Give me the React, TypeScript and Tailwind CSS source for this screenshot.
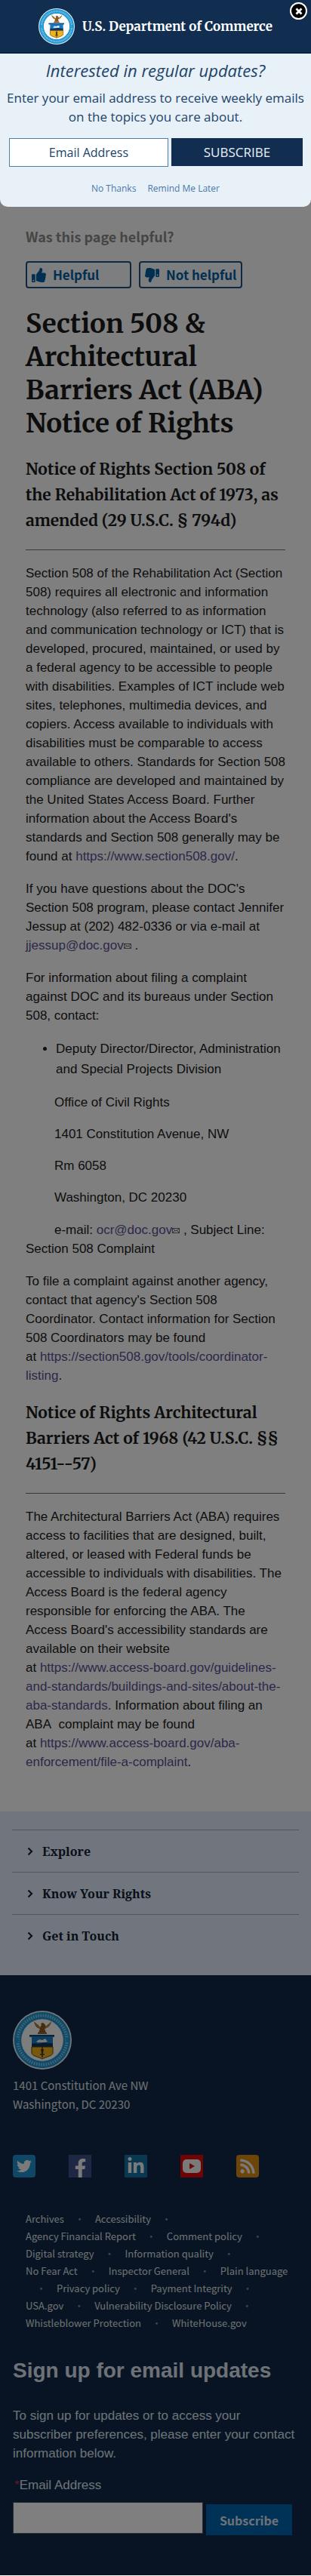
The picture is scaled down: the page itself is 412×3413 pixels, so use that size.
import type { ReactNode } from "react";
import { FaThumbsUp, FaThumbsDown, FaTwitter, FaFacebookF, FaLinkedinIn, FaRss } from "react-icons/fa";

const serif = "font-['Merriweather','Noto_Serif',serif]";
const source = "font-['Noto_Sans_CJK_SC','Noto_Sans',sans-serif]";
const open = "font-['Open_Sans','Noto_Sans',sans-serif]";

function Seal({ className }: { className: string }) {
  return (
    <svg viewBox="0 0 78 78" className={className} aria-label="Department of Commerce seal" role="img">
      <circle cx="39" cy="39" r="39" fill="#e6eef4" />
      <circle cx="39" cy="39" r="32.5" fill="none" stroke="#1e96d2" strokeWidth="9.5" />
      <circle cx="39" cy="39" r="32.5" fill="none" stroke="#c3e4f5" strokeWidth="4" strokeDasharray="1.6 1.6" opacity="0.65" />
      <path d="M5 36v6M73 36v6" stroke="#1e96d2" strokeWidth="5" />
      <circle cx="39" cy="39" r="27.5" fill="#fafafa" />
      <path d="M28 14c1 6 4 9 8 10l-2 5h10l-2-5c4-1 8-4 9-10-2 3-5 4-7 7-1-2-2-4-4-5l-3 1 1 2c-1 1-1 2-2 3-2-4-6-5-8-8z" fill="#8a5a1c" />
      <path d="M30 17c2 3 4 5 6 6M49 17c-2 3-4 5-6 6" stroke="#d09a38" strokeWidth="1.2" fill="none" />
      <path d="M33 30h12" stroke="#5c3a12" strokeWidth="1.5" />
      <path d="M22 32h33v3h-2v13H25V35h-3z" fill="#1879be" />
      <path d="M22 32h33v2H22z" fill="#17466f" />
      <path d="M25 44c5-2 8 1 13-1s9 1 15 0v5H25z" fill="#12355c" />
      <path d="M31 41l4-3 4 1 4-2 3 4-3 1H33z" fill="#e9f1f6" />
      <path d="M25 48h28v8c0 4-9 5-14 8-5-3-14-4-14-8z" fill="#eeb11f" />
      <path d="M25 48h28v8c0 4-9 5-14 8-5-3-14-4-14-8z" fill="none" stroke="#5e430c" strokeWidth="1" />
      <path d="M39 48v14M36 58h6" stroke="#4a3814" strokeWidth="1.6" />
      <path d="M37 51h4l-1 6h-2z" fill="#4a3814" />
    </svg>
  );
}

function Mail() {
  return (
    <svg viewBox="0 0 10 7" className="inline h-[7px] w-2.5" aria-label="email link" role="img">
      <rect x="0.5" y="0.5" width="9" height="6" fill="none" stroke="#6c6c6c" />
      <path d="M1 1l4 3 4-3M1 6l3-3M9 6L6 3" fill="none" stroke="#6c6c6c" />
    </svg>
  );
}

function Link({ children, href }: { children: ReactNode; href: string }) {
  return (
    <a href={href} className="text-[#5a5094]">
      {children}
    </a>
  );
}

function Modal() {
  return (
    <section className={`absolute inset-x-0 top-0 overflow-hidden rounded-b-[10px] bg-[#e8f0f8] text-[#204468] ${open}`}>
      <header className="flex h-[71px] items-center justify-center gap-2.5 border-b-2 border-[#0c2444] bg-[#112e51]">
        <Seal className="size-12" />
        <span className={`text-[17px] leading-6 font-bold text-white ${serif}`}>U.S. Department of Commerce</span>
      </header>
      <button aria-label="Close" className="absolute top-[3px] right-[5px] flex size-[23px] items-center justify-center rounded-full border-2 border-white bg-black">
        <svg viewBox="0 0 10 10" className="size-2.5">
          <path d="M1.5 1.5l7 7M8.5 1.5l-7 7" stroke="#fff" strokeWidth="2.8" />
        </svg>
      </button>
      <div className="px-2 pt-1.5 pb-[15px] text-center">
        <h2 className="text-[22px] leading-8 italic">Interested in regular updates?</h2>
        <p className="mt-2 text-[17px] leading-[25px]">
          Enter your email address to receive weekly emails on the topics you care about.
        </p>
        <form className="mt-4 flex gap-1 pr-[3px] pl-1" onSubmit={(e) => e.preventDefault()}>
          <input
            type="email"
            aria-label="Email Address"
            placeholder="Email Address"
            className="h-[38px] w-0 min-w-0 flex-[6] border border-[#4a7fae] bg-white text-center text-base placeholder:text-[#204468]"
          />
          <button className="h-[37px] flex-[5] bg-[#112e51] text-[17px] text-[#e8f0f8]">SUBSCRIBE</button>
        </form>
        <div className="mt-5 flex justify-center gap-[15px] text-xs leading-[18px] text-[#4a7aa8]">
          <a href="#no">No Thanks</a>
          <a href="#later">Remind Me Later</a>
        </div>
      </div>
    </section>
  );
}

const h2 = `border-b border-[#707070] pb-[21px] text-[21px] leading-[34px] font-bold ${serif}`;

const links = [
  "Archives",
  "Accessibility",
  "Agency Financial Report",
  "Comment policy",
  "Digital strategy",
  "Information quality",
  "No Fear Act",
  "Inspector General",
  "Plain language",
  "Privacy policy",
  "Payment Integrity",
  "USA.gov",
  "Vulnerability Disclosure Policy",
  "Whistleblower Protection",
  "WhiteHouse.gov",
];

export default function App() {
  return (
    <div className="relative bg-white font-['Liberation_Sans',Arial,sans-serif] text-[#1b1b1b]">
      <main className="px-[34px] pt-[301px] pb-[53px]">
        <p className={`text-[18px] leading-6 font-bold text-[#8a8a8a] ${source}`}>Was this page helpful?</p>
        <div className={`mt-[21px] flex gap-2.5 text-[17px] leading-6 font-bold text-[#005ea2] ${source}`}>
          <button className="flex h-9 w-[140px] items-center gap-[9px] rounded border-2 border-[#205080] bg-[#fafcff] px-1.5">
            <FaThumbsUp className="size-[19px]" />
            Helpful
          </button>
          <button className="flex h-9 items-center gap-[9px] rounded border-2 border-[#205080] bg-[#fafcff] px-1.5 whitespace-nowrap">
            <FaThumbsDown className="size-[19px] -scale-x-100" />
            Not helpful
          </button>
        </div>
        <h1 className={`mt-[25px] text-[35px] leading-[44px] font-bold ${serif}`}>
          Section 508 &amp; Architectural Barriers Act (ABA) Notice of Rights
        </h1>
        <h2 className={`mt-[22px] ${h2}`}>Notice of Rights Section 508 of the Rehabilitation Act of 1973, as amended (29 U.S.C. § 794d)</h2>
        <div className="mt-[18px] space-y-[18px] text-[17px] leading-[25px]">
          <p>
            Section 508 of the Rehabilitation Act (Section 508) requires all electronic and information technology (also
            referred to as information and communication technology or ICT) that is developed, procured, maintained, or
            used by a federal agency to be accessible to people with disabilities. Examples of ICT include web sites,
            telephones, multimedia devices, and copiers. Access available to individuals with disabilities must be
            comparable to access available to others. Standards for Section 508 compliance are developed and maintained
            by the United States Access Board. Further information about the Access Board's standards and Section 508
            generally may be found at&nbsp;<Link href="https://www.section508.gov/">https://www.section508.gov/</Link>.
          </p>
          <p>
            If you have questions about the DOC's Section 508 program, please contact Jennifer Jessup at (202) 482-0336
            or via e-mail at <Link href="mailto:jjessup@doc.gov">jjessup@doc.gov<Mail /></Link> .
          </p>
          <p>For information about filing a complaint against DOC and its bureaus under Section 508, contact:</p>
          <ul className="-mr-2 list-disc pl-10 leading-[27px]">
            <li>Deputy Director/Director, Administration and Special Projects Division</li>
          </ul>
          <div className="space-y-[17px] indent-[38px]">
            <p>Office of Civil Rights</p>
            <p>1401 Constitution Avenue, NW</p>
            <p>Rm 6058</p>
            <p>Washington, DC 20230</p>
          </div>
          <p className="indent-[38px]">
            e-mail: <Link href="mailto:ocr@doc.gov">ocr@doc.gov<Mail /></Link> , Subject Line: Section 508 Complaint
          </p>
          <p>
            To file a complaint against another agency, contact that agency's Section 508 Coordinator. Contact
            information for Section 508 Coordinators may be found
            at&nbsp;<Link href="https://section508.gov/tools/coordinator-listing">https://section508.gov/tools/coordinator-listing</Link>.
          </p>
        </div>
        <h2 className={`mt-5 ${h2}`}>Notice of Rights Architectural Barriers Act of 1968 (42 U.S.C. §§ 4151--57)</h2>
        <p className="mt-[18px] text-[17px] leading-[25px]">
          The Architectural Barriers Act (ABA) requires access to facilities that are designed, built, altered, or leased
          with Federal funds be accessible to individuals with disabilities. The Access Board is the federal agency
          responsible for enforcing the ABA. The Access Board's accessibility standards are available on their website
          at&nbsp;<Link href="https://www.access-board.gov/guidelines-and-standards">https://www.access-board.gov/guidelines-and-standards/buildings-and-sites/about-the-aba-standards</Link>.
          Information about filing an ABA&nbsp; complaint may be found
          at&nbsp;<Link href="https://www.access-board.gov/aba-enforcement/file-a-complaint">https://www.access-board.gov/aba-enforcement/file-a-complaint</Link>.
        </p>
      </main>

      <nav className="bg-[#e3edfd] px-4 pt-6 pb-[25px]">
        {["Explore", "Know Your Rights", "Get in Touch"].map((t) => (
          <a key={t} href="#section" className="flex h-14 items-center gap-3 border-t border-[#a6adba] pl-5 font-['Noto_Serif',serif] text-base font-bold text-[#112030]">
            <svg viewBox="0 0 8 12" className="h-3 w-2">
              <path d="M1.5 1.5L6 6l-4.5 4.5" fill="none" stroke="#112030" strokeWidth="2.2" />
            </svg>
            {t}
          </a>
        ))}
      </nav>

      <footer className="bg-[#102848] px-[17px] pt-[47px] pb-[53px] text-[#dce4ec]">
        <Seal className="size-[78px]" />
        <address className={`mt-2 text-[15px] leading-[25px] text-[#dfe1e2] not-italic ${source}`}>
          1401 Constitution Ave NW
          <br />
          Washington, DC 20230
        </address>
        <div className="mt-[55px] flex gap-11 text-[#f4f4f4]">
          <a href="#twitter" aria-label="Twitter" className="flex size-[30px] items-center justify-center rounded bg-[#1d90cc]"><FaTwitter className="size-5" /></a>
          <a href="#facebook" aria-label="Facebook" className="flex size-[30px] items-end justify-center bg-[#3c4f86]"><FaFacebookF className="size-[25px]" /></a>
          <a href="#linkedin" aria-label="LinkedIn" className="flex size-[30px] items-center justify-center bg-[#1271a6]"><FaLinkedinIn className="size-6" /></a>
          <a href="#youtube" aria-label="YouTube" className="flex size-[30px] items-center justify-center bg-[#e00808]">
            <svg viewBox="0 0 24 18" className="h-[18px] w-6">
              <rect width="24" height="18" rx="5" fill="#f4f4f4" />
              <path d="M9 5l7 4-7 4z" fill="#d01818" />
            </svg>
          </a>
          <a href="#rss" aria-label="RSS" className="flex size-[30px] items-center justify-center rounded bg-[#d98a12]"><FaRss className="size-[22px]" /></a>
        </div>
        <ul className={`mt-[43px] flex flex-wrap pr-[9px] pl-[17px] text-[13px] leading-[23px] text-[#dfe1e2] ${source}`}>
          {links.flatMap((t, i) => [
            <li key={t}><a href="#link">{t}</a></li>,
            i < links.length - 1 && <li key={t + "dot"} aria-hidden className="w-[41px] text-center text-[#7c8ca0]">•</li>,
          ])}
        </ul>
        <h2 className="mt-[31px] text-[28px] leading-[42px] font-bold">Sign up for email updates</h2>
        <p className="mt-[26px] text-[17px] leading-[25px]">
          To sign up for updates or to access your subscriber preferences, please enter your contact information below.
        </p>
        <form className="mt-[17px]" onSubmit={(e) => e.preventDefault()}>
          <label htmlFor="email" className="block text-[17px] leading-[25px]">
            <span className="pl-0.5 text-[#c03040]">*</span>Email Address
          </label>
          <div className="mt-2.5 flex gap-1 pr-2">
            <input id="email" type="email" className="h-[42px] w-0 min-w-0 flex-1 border border-[#565c65] bg-white px-2 text-base" />
            <button className={`mt-[3px] h-[41px] w-[114px] bg-[#0062ae] text-base font-bold ${source}`}>Subscribe</button>
          </div>
        </form>
      </footer>

      <div className="absolute inset-0 bg-black/50" />
      <Modal />
    </div>
  );
}
